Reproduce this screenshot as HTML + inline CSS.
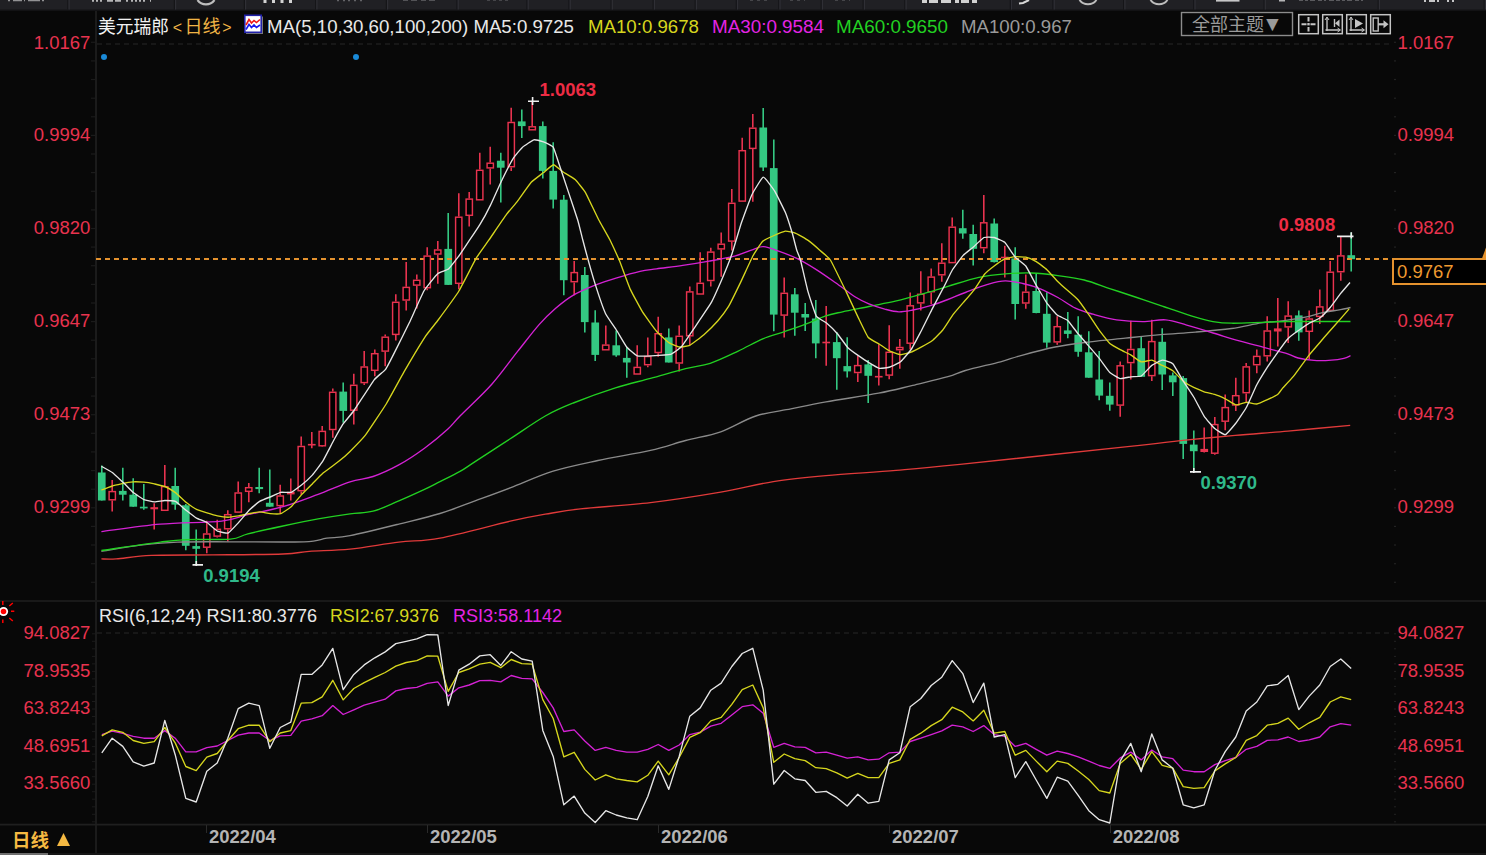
<!DOCTYPE html>
<html lang="zh"><head><meta charset="utf-8"><title>美元瑞郎 日线</title>
<style>
html,body{margin:0;padding:0;background:#080808;}
body{width:1486px;height:855px;overflow:hidden;position:relative;font-family:"Liberation Sans", "Noto Sans CJK SC", sans-serif;}
svg{position:absolute;left:0;top:0;display:block;}
svg text{font-family:"Liberation Sans", "Noto Sans CJK SC", sans-serif;}
</style></head><body>
<svg width="1486" height="855" viewBox="0 0 1486 855">
<rect width="1486" height="855" fill="#080808"/>
<rect x="0" y="0" width="1486" height="10" fill="#202024"/>
<rect x="0" y="9.5" width="1486" height="1.5" fill="#121214"/>
<rect x="67.3" y="0" width="1.2" height="9.5" fill="#151518"/>
<rect x="68.5" y="0" width="1.2" height="9.5" fill="#2f2f35"/>
<rect x="173.8" y="0" width="1.2" height="9.5" fill="#151518"/>
<rect x="175" y="0" width="1.2" height="9.5" fill="#2f2f35"/>
<rect x="243.8" y="0" width="1.2" height="9.5" fill="#151518"/>
<rect x="245" y="0" width="1.2" height="9.5" fill="#2f2f35"/>
<rect x="315.1" y="0" width="1.2" height="9.5" fill="#151518"/>
<rect x="316.3" y="0" width="1.2" height="9.5" fill="#2f2f35"/>
<rect x="385.8" y="0" width="1.2" height="9.5" fill="#151518"/>
<rect x="387" y="0" width="1.2" height="9.5" fill="#2f2f35"/>
<rect x="456.4" y="0" width="1.2" height="9.5" fill="#151518"/>
<rect x="457.6" y="0" width="1.2" height="9.5" fill="#2f2f35"/>
<rect x="526.4" y="0" width="1.2" height="9.5" fill="#151518"/>
<rect x="527.6" y="0" width="1.2" height="9.5" fill="#2f2f35"/>
<rect x="568.4" y="0" width="1.2" height="9.5" fill="#151518"/>
<rect x="569.6" y="0" width="1.2" height="9.5" fill="#2f2f35"/>
<rect x="610.5" y="0" width="1.2" height="9.5" fill="#151518"/>
<rect x="611.7" y="0" width="1.2" height="9.5" fill="#2f2f35"/>
<rect x="652.6" y="0" width="1.2" height="9.5" fill="#151518"/>
<rect x="653.8" y="0" width="1.2" height="9.5" fill="#2f2f35"/>
<rect x="694.6" y="0" width="1.2" height="9.5" fill="#151518"/>
<rect x="695.8" y="0" width="1.2" height="9.5" fill="#2f2f35"/>
<rect x="735.7" y="0" width="1.2" height="9.5" fill="#151518"/>
<rect x="736.9" y="0" width="1.2" height="9.5" fill="#2f2f35"/>
<rect x="778.2" y="0" width="1.2" height="9.5" fill="#151518"/>
<rect x="779.4" y="0" width="1.2" height="9.5" fill="#2f2f35"/>
<rect x="820.6" y="0" width="1.2" height="9.5" fill="#151518"/>
<rect x="821.8" y="0" width="1.2" height="9.5" fill="#2f2f35"/>
<rect x="862.6" y="0" width="1.2" height="9.5" fill="#151518"/>
<rect x="863.8" y="0" width="1.2" height="9.5" fill="#2f2f35"/>
<rect x="904.3" y="0" width="1.2" height="9.5" fill="#151518"/>
<rect x="905.5" y="0" width="1.2" height="9.5" fill="#2f2f35"/>
<rect x="1009.7" y="0" width="1.2" height="9.5" fill="#151518"/>
<rect x="1010.9" y="0" width="1.2" height="9.5" fill="#2f2f35"/>
<rect x="1052.4" y="0" width="1.2" height="9.5" fill="#151518"/>
<rect x="1053.6" y="0" width="1.2" height="9.5" fill="#2f2f35"/>
<rect x="1123.1" y="0" width="1.2" height="9.5" fill="#151518"/>
<rect x="1124.3" y="0" width="1.2" height="9.5" fill="#2f2f35"/>
<rect x="1193.2" y="0" width="1.2" height="9.5" fill="#151518"/>
<rect x="1194.4" y="0" width="1.2" height="9.5" fill="#2f2f35"/>
<rect x="1263.5" y="0" width="1.2" height="9.5" fill="#151518"/>
<rect x="1264.7" y="0" width="1.2" height="9.5" fill="#2f2f35"/>
<rect x="1377.6" y="0" width="1.2" height="9.5" fill="#151518"/>
<rect x="1378.8" y="0" width="1.2" height="9.5" fill="#2f2f35"/>
<rect x="1483.6" y="0" width="1.2" height="9.5" fill="#151518"/>
<rect x="1484.8" y="0" width="1.2" height="9.5" fill="#2f2f35"/>
<line x1="8" y1="0.65" x2="45" y2="0.65" stroke="#d0d0d0" stroke-width="1.3" stroke-dasharray="2 3 9 2 1 3 12 2" opacity="0.65"/>
<line x1="92" y1="0.85" x2="151" y2="0.85" stroke="#e8e8e8" stroke-width="1.7" stroke-dasharray="2 2 2 2 2 5 6 2 6 5 2 3 2 2" opacity="0.75"/>
<path d="M197.500 0A10.5 10.5 0 0 0 214.5 0" fill="none" stroke="#bdbdbd" stroke-width="2.2"/>
<line x1="263.5" y1="1.5" x2="292" y2="1.5" stroke="#f2f2f2" stroke-width="3" stroke-dasharray="3 5.5" opacity="0.85"/>
<line x1="337" y1="0.6" x2="362" y2="0.6" stroke="#707074" stroke-width="1.2" stroke-dasharray="2 4 2 3 2 4" opacity="0.85"/>
<line x1="403" y1="0.5" x2="437" y2="0.5" stroke="#5c5c60" stroke-width="1" stroke-dasharray="5 3 6 4" opacity="0.85"/>
<line x1="487" y1="0.5" x2="508" y2="0.5" stroke="#4c4c50" stroke-width="1" stroke-dasharray="3 3" opacity="0.85"/>
<line x1="750" y1="0.5" x2="770" y2="0.5" stroke="#4c4c50" stroke-width="1" stroke-dasharray="3 4" opacity="0.85"/>
<line x1="790" y1="0.5" x2="805" y2="0.5" stroke="#4c4c50" stroke-width="1" stroke-dasharray="3 4" opacity="0.85"/>
<line x1="835" y1="0.5" x2="850" y2="0.5" stroke="#4c4c50" stroke-width="1" stroke-dasharray="3 4" opacity="0.85"/>
<line x1="922" y1="1.5" x2="979" y2="1.5" stroke="#f0f0f0" stroke-width="3" stroke-dasharray="5 2 9 3 10 4 4 2 8 3" opacity="0.85"/>
<path d="M1019 3.5L1023 3L1029 0" fill="none" stroke="#d8d8d8" stroke-width="2"/>
<path d="M1079.500 0A10.5 10.5 0 0 0 1096.5 0" fill="none" stroke="#bdbdbd" stroke-width="2"/>
<path d="M1150.500 0A10.5 10.5 0 0 0 1167.5 0" fill="none" stroke="#bdbdbd" stroke-width="2"/>
<line x1="1216" y1="0.8" x2="1239.5" y2="0.8" stroke="#e4e4e4" stroke-width="1.6" stroke-dasharray="30 1" opacity="0.85"/>
<line x1="1279" y1="0.75" x2="1285" y2="0.75" stroke="#d0d0d0" stroke-width="1.5" stroke-dasharray="6 1" opacity="0.85"/>
<line x1="1299" y1="0.5" x2="1364" y2="0.5" stroke="#66666a" stroke-width="1" stroke-dasharray="4 2 3 2 5 3 4 2 2 3 5 2" opacity="0.85"/>
<line x1="1424" y1="1.0" x2="1454" y2="1.0" stroke="#e4e4e4" stroke-width="2" stroke-dasharray="2 3 6 2 2 8 2 3 2" opacity="0.85"/>
<rect x="95" y="11" width="2" height="844" fill="#1b1b1b"/>
<rect x="0" y="600" width="1486" height="2" fill="#191919"/>
<rect x="0" y="823.7" width="1486" height="1.8" fill="#1f1f1f"/>
<rect x="91" y="41.7" width="4" height="1.2" fill="#1b1b1b"/>
<rect x="1394" y="41.7" width="2" height="1.2" fill="#222"/>
<rect x="91" y="60.3" width="4" height="1.2" fill="#1b1b1b"/>
<rect x="1394" y="60.3" width="2" height="1.2" fill="#222"/>
<rect x="91" y="78.9" width="4" height="1.2" fill="#1b1b1b"/>
<rect x="1394" y="78.9" width="2" height="1.2" fill="#222"/>
<rect x="91" y="97.6" width="4" height="1.2" fill="#1b1b1b"/>
<rect x="1394" y="97.6" width="2" height="1.2" fill="#222"/>
<rect x="91" y="116.2" width="4" height="1.2" fill="#1b1b1b"/>
<rect x="1394" y="116.2" width="2" height="1.2" fill="#222"/>
<rect x="91" y="134.8" width="4" height="1.2" fill="#1b1b1b"/>
<rect x="1394" y="134.8" width="2" height="1.2" fill="#222"/>
<rect x="91" y="153.4" width="4" height="1.2" fill="#1b1b1b"/>
<rect x="1394" y="153.4" width="2" height="1.2" fill="#222"/>
<rect x="91" y="172" width="4" height="1.2" fill="#1b1b1b"/>
<rect x="1394" y="172" width="2" height="1.2" fill="#222"/>
<rect x="91" y="190.7" width="4" height="1.2" fill="#1b1b1b"/>
<rect x="1394" y="190.7" width="2" height="1.2" fill="#222"/>
<rect x="91" y="209.3" width="4" height="1.2" fill="#1b1b1b"/>
<rect x="1394" y="209.3" width="2" height="1.2" fill="#222"/>
<rect x="91" y="227.9" width="4" height="1.2" fill="#1b1b1b"/>
<rect x="1394" y="227.9" width="2" height="1.2" fill="#222"/>
<rect x="91" y="246.5" width="4" height="1.2" fill="#1b1b1b"/>
<rect x="1394" y="246.5" width="2" height="1.2" fill="#222"/>
<rect x="91" y="265.1" width="4" height="1.2" fill="#1b1b1b"/>
<rect x="1394" y="265.1" width="2" height="1.2" fill="#222"/>
<rect x="91" y="283.8" width="4" height="1.2" fill="#1b1b1b"/>
<rect x="1394" y="283.8" width="2" height="1.2" fill="#222"/>
<rect x="91" y="302.4" width="4" height="1.2" fill="#1b1b1b"/>
<rect x="1394" y="302.4" width="2" height="1.2" fill="#222"/>
<rect x="91" y="321" width="4" height="1.2" fill="#1b1b1b"/>
<rect x="1394" y="321" width="2" height="1.2" fill="#222"/>
<rect x="91" y="339.6" width="4" height="1.2" fill="#1b1b1b"/>
<rect x="1394" y="339.6" width="2" height="1.2" fill="#222"/>
<rect x="91" y="358.2" width="4" height="1.2" fill="#1b1b1b"/>
<rect x="1394" y="358.2" width="2" height="1.2" fill="#222"/>
<rect x="91" y="376.9" width="4" height="1.2" fill="#1b1b1b"/>
<rect x="1394" y="376.9" width="2" height="1.2" fill="#222"/>
<rect x="91" y="395.5" width="4" height="1.2" fill="#1b1b1b"/>
<rect x="1394" y="395.5" width="2" height="1.2" fill="#222"/>
<rect x="91" y="414.1" width="4" height="1.2" fill="#1b1b1b"/>
<rect x="1394" y="414.1" width="2" height="1.2" fill="#222"/>
<rect x="91" y="432.7" width="4" height="1.2" fill="#1b1b1b"/>
<rect x="1394" y="432.7" width="2" height="1.2" fill="#222"/>
<rect x="91" y="451.3" width="4" height="1.2" fill="#1b1b1b"/>
<rect x="1394" y="451.3" width="2" height="1.2" fill="#222"/>
<rect x="91" y="470" width="4" height="1.2" fill="#1b1b1b"/>
<rect x="1394" y="470" width="2" height="1.2" fill="#222"/>
<rect x="91" y="488.6" width="4" height="1.2" fill="#1b1b1b"/>
<rect x="1394" y="488.6" width="2" height="1.2" fill="#222"/>
<rect x="91" y="507.2" width="4" height="1.2" fill="#1b1b1b"/>
<rect x="1394" y="507.2" width="2" height="1.2" fill="#222"/>
<rect x="91" y="525.8" width="4" height="1.2" fill="#1b1b1b"/>
<rect x="1394" y="525.8" width="2" height="1.2" fill="#222"/>
<rect x="91" y="544.4" width="4" height="1.2" fill="#1b1b1b"/>
<rect x="1394" y="544.4" width="2" height="1.2" fill="#222"/>
<rect x="91" y="563.1" width="4" height="1.2" fill="#1b1b1b"/>
<rect x="1394" y="563.1" width="2" height="1.2" fill="#222"/>
<rect x="91" y="581.7" width="4" height="1.2" fill="#1b1b1b"/>
<rect x="1394" y="581.7" width="2" height="1.2" fill="#222"/>
<rect x="92" y="633.3" width="3" height="1" fill="#1b1b1b"/>
<rect x="1394" y="633.3" width="2" height="1" fill="#222"/>
<rect x="92" y="640.8" width="3" height="1" fill="#1b1b1b"/>
<rect x="1394" y="640.8" width="2" height="1" fill="#222"/>
<rect x="92" y="648.3" width="3" height="1" fill="#1b1b1b"/>
<rect x="1394" y="648.3" width="2" height="1" fill="#222"/>
<rect x="92" y="655.9" width="3" height="1" fill="#1b1b1b"/>
<rect x="1394" y="655.9" width="2" height="1" fill="#222"/>
<rect x="92" y="663.4" width="3" height="1" fill="#1b1b1b"/>
<rect x="1394" y="663.4" width="2" height="1" fill="#222"/>
<rect x="92" y="670.9" width="3" height="1" fill="#1b1b1b"/>
<rect x="1394" y="670.9" width="2" height="1" fill="#222"/>
<rect x="92" y="678.4" width="3" height="1" fill="#1b1b1b"/>
<rect x="1394" y="678.4" width="2" height="1" fill="#222"/>
<rect x="92" y="685.9" width="3" height="1" fill="#1b1b1b"/>
<rect x="1394" y="685.9" width="2" height="1" fill="#222"/>
<rect x="92" y="693.5" width="3" height="1" fill="#1b1b1b"/>
<rect x="1394" y="693.5" width="2" height="1" fill="#222"/>
<rect x="92" y="701" width="3" height="1" fill="#1b1b1b"/>
<rect x="1394" y="701" width="2" height="1" fill="#222"/>
<rect x="92" y="708.5" width="3" height="1" fill="#1b1b1b"/>
<rect x="1394" y="708.5" width="2" height="1" fill="#222"/>
<rect x="92" y="716" width="3" height="1" fill="#1b1b1b"/>
<rect x="1394" y="716" width="2" height="1" fill="#222"/>
<rect x="92" y="723.5" width="3" height="1" fill="#1b1b1b"/>
<rect x="1394" y="723.5" width="2" height="1" fill="#222"/>
<rect x="92" y="731.1" width="3" height="1" fill="#1b1b1b"/>
<rect x="1394" y="731.1" width="2" height="1" fill="#222"/>
<rect x="92" y="738.6" width="3" height="1" fill="#1b1b1b"/>
<rect x="1394" y="738.6" width="2" height="1" fill="#222"/>
<rect x="92" y="746.1" width="3" height="1" fill="#1b1b1b"/>
<rect x="1394" y="746.1" width="2" height="1" fill="#222"/>
<rect x="92" y="753.6" width="3" height="1" fill="#1b1b1b"/>
<rect x="1394" y="753.6" width="2" height="1" fill="#222"/>
<rect x="92" y="761.1" width="3" height="1" fill="#1b1b1b"/>
<rect x="1394" y="761.1" width="2" height="1" fill="#222"/>
<rect x="92" y="768.7" width="3" height="1" fill="#1b1b1b"/>
<rect x="1394" y="768.7" width="2" height="1" fill="#222"/>
<rect x="92" y="776.2" width="3" height="1" fill="#1b1b1b"/>
<rect x="1394" y="776.2" width="2" height="1" fill="#222"/>
<rect x="92" y="783.7" width="3" height="1" fill="#1b1b1b"/>
<rect x="1394" y="783.7" width="2" height="1" fill="#222"/>
<rect x="92" y="791.2" width="3" height="1" fill="#1b1b1b"/>
<rect x="1394" y="791.2" width="2" height="1" fill="#222"/>
<rect x="92" y="798.7" width="3" height="1" fill="#1b1b1b"/>
<rect x="1394" y="798.7" width="2" height="1" fill="#222"/>
<rect x="92" y="806.3" width="3" height="1" fill="#1b1b1b"/>
<rect x="1394" y="806.3" width="2" height="1" fill="#222"/>
<rect x="92" y="813.8" width="3" height="1" fill="#1b1b1b"/>
<rect x="1394" y="813.8" width="2" height="1" fill="#222"/>
<rect x="92" y="821.3" width="3" height="1" fill="#1b1b1b"/>
<rect x="1394" y="821.3" width="2" height="1" fill="#222"/>
<line x1="97" y1="44" x2="1392" y2="44" stroke="#1d1d1d" stroke-width="1.6" stroke-dasharray="5 4"/>
<line x1="97" y1="633" x2="1392" y2="633" stroke="#1d1d1d" stroke-width="1.6" stroke-dasharray="5 4"/>
<rect x="206" y="825" width="1" height="8" fill="#2a2a2a"/>
<rect x="427" y="825" width="1" height="8" fill="#2a2a2a"/>
<rect x="658" y="825" width="1" height="8" fill="#2a2a2a"/>
<rect x="889" y="825" width="1" height="8" fill="#2a2a2a"/>
<rect x="1110" y="825" width="1" height="8" fill="#2a2a2a"/>
<rect x="0" y="853" width="1486" height="2" fill="#161616"/>
<rect x="0" y="853" width="48" height="2" fill="#6e6e6e"/>
<circle cx="104" cy="57" r="3" fill="#1a8ad8"/>
<circle cx="356" cy="57" r="3" fill="#1a8ad8"/>
<line x1="101.8" y1="465.4" x2="101.8" y2="500.5" stroke="#34c882" stroke-width="1.6"/>
<rect x="97.9" y="472.5" width="7.7" height="28" fill="#34c882"/>
<line x1="122.8" y1="467.7" x2="122.8" y2="500.5" stroke="#34c882" stroke-width="1.6"/>
<rect x="118.9" y="490.9" width="7.7" height="3.8" fill="#34c882"/>
<line x1="133.2" y1="478.2" x2="133.2" y2="506.7" stroke="#34c882" stroke-width="1.6"/>
<rect x="129.4" y="494.7" width="7.7" height="12" fill="#34c882"/>
<line x1="143.8" y1="483.9" x2="143.8" y2="509.8" stroke="#34c882" stroke-width="1.6"/>
<rect x="139.9" y="506.7" width="7.7" height="1.7" fill="#34c882"/>
<line x1="175.2" y1="467.7" x2="175.2" y2="509.8" stroke="#34c882" stroke-width="1.6"/>
<rect x="171.4" y="486" width="7.7" height="18.6" fill="#34c882"/>
<line x1="185.8" y1="504" x2="185.8" y2="550.2" stroke="#34c882" stroke-width="1.6"/>
<rect x="181.9" y="505.3" width="7.7" height="40.5" fill="#34c882"/>
<line x1="196.2" y1="529.5" x2="196.2" y2="564.9" stroke="#34c882" stroke-width="1.6"/>
<rect x="192.4" y="546.1" width="7.7" height="2.7" fill="#34c882"/>
<line x1="259.2" y1="467.7" x2="259.2" y2="493.2" stroke="#34c882" stroke-width="1.6"/>
<rect x="255.4" y="487" width="7.7" height="2.1" fill="#34c882"/>
<line x1="269.8" y1="469.5" x2="269.8" y2="506.7" stroke="#34c882" stroke-width="1.6"/>
<rect x="265.9" y="502.8" width="7.7" height="3.9" fill="#34c882"/>
<line x1="343.2" y1="382.5" x2="343.2" y2="422.8" stroke="#34c882" stroke-width="1.6"/>
<rect x="339.4" y="391.6" width="7.7" height="19.3" fill="#34c882"/>
<line x1="448.2" y1="213" x2="448.2" y2="284.9" stroke="#34c882" stroke-width="1.6"/>
<rect x="444.4" y="248.9" width="7.7" height="36" fill="#34c882"/>
<line x1="500.8" y1="152.8" x2="500.8" y2="202.5" stroke="#34c882" stroke-width="1.6"/>
<rect x="496.9" y="160.7" width="7.7" height="7" fill="#34c882"/>
<line x1="521.8" y1="109.5" x2="521.8" y2="138.1" stroke="#34c882" stroke-width="1.6"/>
<rect x="517.9" y="121.4" width="7.7" height="4.7" fill="#34c882"/>
<line x1="542.8" y1="121.4" x2="542.8" y2="178.4" stroke="#34c882" stroke-width="1.6"/>
<rect x="538.9" y="126.1" width="7.7" height="44.8" fill="#34c882"/>
<line x1="553.2" y1="142.3" x2="553.2" y2="208.6" stroke="#34c882" stroke-width="1.6"/>
<rect x="549.4" y="170.9" width="7.7" height="28.7" fill="#34c882"/>
<line x1="563.8" y1="195" x2="563.8" y2="295.3" stroke="#34c882" stroke-width="1.6"/>
<rect x="559.9" y="199.7" width="7.7" height="80.5" fill="#34c882"/>
<line x1="584.8" y1="267" x2="584.8" y2="332.6" stroke="#34c882" stroke-width="1.6"/>
<rect x="580.9" y="275" width="7.7" height="47.1" fill="#34c882"/>
<line x1="595.2" y1="310.3" x2="595.2" y2="361" stroke="#34c882" stroke-width="1.6"/>
<rect x="591.4" y="322.5" width="7.7" height="32.4" fill="#34c882"/>
<line x1="616.2" y1="330.4" x2="616.2" y2="356.7" stroke="#34c882" stroke-width="1.6"/>
<rect x="612.4" y="345.3" width="7.7" height="10.1" fill="#34c882"/>
<line x1="626.8" y1="347" x2="626.8" y2="377.7" stroke="#34c882" stroke-width="1.6"/>
<rect x="622.9" y="357.9" width="7.7" height="4.6" fill="#34c882"/>
<line x1="668.8" y1="328.6" x2="668.8" y2="362.5" stroke="#34c882" stroke-width="1.6"/>
<rect x="664.9" y="337.4" width="7.7" height="25.1" fill="#34c882"/>
<line x1="763.2" y1="107.9" x2="763.2" y2="171" stroke="#34c882" stroke-width="1.6"/>
<rect x="759.4" y="127.5" width="7.7" height="40" fill="#34c882"/>
<line x1="773.8" y1="139.5" x2="773.8" y2="331.2" stroke="#34c882" stroke-width="1.6"/>
<rect x="769.9" y="168.1" width="7.7" height="146.5" fill="#34c882"/>
<line x1="794.8" y1="288.1" x2="794.8" y2="335.7" stroke="#34c882" stroke-width="1.6"/>
<rect x="790.9" y="294.3" width="7.7" height="18.4" fill="#34c882"/>
<line x1="805.2" y1="303.1" x2="805.2" y2="331.1" stroke="#34c882" stroke-width="1.6"/>
<rect x="801.4" y="314" width="7.7" height="3.5" fill="#34c882"/>
<line x1="815.8" y1="300" x2="815.8" y2="358.3" stroke="#34c882" stroke-width="1.6"/>
<rect x="811.9" y="318.5" width="7.7" height="24.9" fill="#34c882"/>
<line x1="836.8" y1="331.9" x2="836.8" y2="389.8" stroke="#34c882" stroke-width="1.6"/>
<rect x="832.9" y="342.1" width="7.7" height="16.1" fill="#34c882"/>
<line x1="847.2" y1="337.2" x2="847.2" y2="377.5" stroke="#34c882" stroke-width="1.6"/>
<rect x="843.4" y="366.1" width="7.7" height="5.3" fill="#34c882"/>
<line x1="868.2" y1="360" x2="868.2" y2="403" stroke="#34c882" stroke-width="1.6"/>
<rect x="864.4" y="364.4" width="7.7" height="11.4" fill="#34c882"/>
<line x1="962.8" y1="209.8" x2="962.8" y2="238.8" stroke="#34c882" stroke-width="1.6"/>
<rect x="958.9" y="228.2" width="7.7" height="5.3" fill="#34c882"/>
<line x1="973.2" y1="224.7" x2="973.2" y2="265.4" stroke="#34c882" stroke-width="1.6"/>
<rect x="969.4" y="234" width="7.7" height="14.8" fill="#34c882"/>
<line x1="994.2" y1="218.6" x2="994.2" y2="262.5" stroke="#34c882" stroke-width="1.6"/>
<rect x="990.4" y="223.5" width="7.7" height="38.6" fill="#34c882"/>
<line x1="1015.2" y1="247.2" x2="1015.2" y2="319.4" stroke="#34c882" stroke-width="1.6"/>
<rect x="1011.4" y="258.4" width="7.7" height="45.6" fill="#34c882"/>
<line x1="1036.2" y1="273.9" x2="1036.2" y2="313.3" stroke="#34c882" stroke-width="1.6"/>
<rect x="1032.4" y="291" width="7.7" height="22" fill="#34c882"/>
<line x1="1046.8" y1="292.3" x2="1046.8" y2="347.8" stroke="#34c882" stroke-width="1.6"/>
<rect x="1042.9" y="313.8" width="7.7" height="28.8" fill="#34c882"/>
<line x1="1067.8" y1="311.9" x2="1067.8" y2="338.2" stroke="#34c882" stroke-width="1.6"/>
<rect x="1063.9" y="330.4" width="7.7" height="3.5" fill="#34c882"/>
<line x1="1078.2" y1="316.2" x2="1078.2" y2="356.7" stroke="#34c882" stroke-width="1.6"/>
<rect x="1074.4" y="334.7" width="7.7" height="17.1" fill="#34c882"/>
<line x1="1088.8" y1="331.2" x2="1088.8" y2="377.7" stroke="#34c882" stroke-width="1.6"/>
<rect x="1084.9" y="352.3" width="7.7" height="25.4" fill="#34c882"/>
<line x1="1099.2" y1="351.1" x2="1099.2" y2="400.2" stroke="#34c882" stroke-width="1.6"/>
<rect x="1095.4" y="379.5" width="7.7" height="16.1" fill="#34c882"/>
<line x1="1109.8" y1="382.6" x2="1109.8" y2="410.7" stroke="#34c882" stroke-width="1.6"/>
<rect x="1105.9" y="395.8" width="7.7" height="8.8" fill="#34c882"/>
<line x1="1141.2" y1="336" x2="1141.2" y2="376.8" stroke="#34c882" stroke-width="1.6"/>
<rect x="1137.4" y="348.2" width="7.7" height="28.6" fill="#34c882"/>
<line x1="1162.2" y1="328.2" x2="1162.2" y2="389.9" stroke="#34c882" stroke-width="1.6"/>
<rect x="1158.4" y="341.8" width="7.7" height="32.7" fill="#34c882"/>
<line x1="1172.8" y1="372.5" x2="1172.8" y2="396" stroke="#34c882" stroke-width="1.6"/>
<rect x="1168.9" y="375.4" width="7.7" height="6.9" fill="#34c882"/>
<line x1="1183.2" y1="376" x2="1183.2" y2="459.1" stroke="#34c882" stroke-width="1.6"/>
<rect x="1179.4" y="378.1" width="7.7" height="65.8" fill="#34c882"/>
<line x1="1193.8" y1="430.5" x2="1193.8" y2="471.9" stroke="#34c882" stroke-width="1.6"/>
<rect x="1189.9" y="444.6" width="7.7" height="6.6" fill="#34c882"/>
<line x1="1298.8" y1="310.4" x2="1298.8" y2="340.8" stroke="#34c882" stroke-width="1.6"/>
<rect x="1294.9" y="315.4" width="7.7" height="17" fill="#34c882"/>
<line x1="1351.2" y1="232.4" x2="1351.2" y2="271.5" stroke="#34c882" stroke-width="1.6"/>
<rect x="1347.4" y="255.2" width="7.7" height="4" fill="#34c882"/>
<line x1="96" y1="259" x2="1390" y2="259" stroke="#e4922e" stroke-width="2" stroke-dasharray="5 4"/>
<line x1="112.2" y1="480" x2="112.2" y2="490.9" stroke="#e8334f" stroke-width="1.6"/>
<line x1="112.2" y1="500.5" x2="112.2" y2="511.6" stroke="#e8334f" stroke-width="1.6"/>
<rect x="109.1" y="491.6" width="6.3" height="8.2" fill="#000" stroke="#e8334f" stroke-width="1.45"/>
<line x1="154.2" y1="503.2" x2="154.2" y2="529.5" stroke="#e8334f" stroke-width="1.6"/>
<rect x="150.4" y="507.2" width="7.7" height="2.1" fill="#e8334f"/>
<line x1="164.8" y1="465.1" x2="164.8" y2="486" stroke="#e8334f" stroke-width="1.6"/>
<rect x="161.6" y="486.7" width="6.3" height="23.6" fill="#000" stroke="#e8334f" stroke-width="1.45"/>
<line x1="206.8" y1="520.7" x2="206.8" y2="533.3" stroke="#e8334f" stroke-width="1.6"/>
<line x1="206.8" y1="547.9" x2="206.8" y2="553.2" stroke="#e8334f" stroke-width="1.6"/>
<rect x="203.6" y="534" width="6.3" height="13.2" fill="#000" stroke="#e8334f" stroke-width="1.45"/>
<line x1="217.2" y1="519.8" x2="217.2" y2="528.6" stroke="#e8334f" stroke-width="1.6"/>
<line x1="217.2" y1="536.8" x2="217.2" y2="537.4" stroke="#e8334f" stroke-width="1.6"/>
<rect x="214.1" y="529.3" width="6.3" height="6.8" fill="#000" stroke="#e8334f" stroke-width="1.45"/>
<line x1="227.8" y1="510.2" x2="227.8" y2="514" stroke="#e8334f" stroke-width="1.6"/>
<line x1="227.8" y1="529.5" x2="227.8" y2="541.4" stroke="#e8334f" stroke-width="1.6"/>
<rect x="224.6" y="514.7" width="6.3" height="14.1" fill="#000" stroke="#e8334f" stroke-width="1.45"/>
<line x1="238.2" y1="481.6" x2="238.2" y2="492.3" stroke="#e8334f" stroke-width="1.6"/>
<rect x="235.1" y="493" width="6.3" height="19.1" fill="#000" stroke="#e8334f" stroke-width="1.45"/>
<line x1="248.8" y1="483" x2="248.8" y2="487" stroke="#e8334f" stroke-width="1.6"/>
<line x1="248.8" y1="492" x2="248.8" y2="502.3" stroke="#e8334f" stroke-width="1.6"/>
<rect x="245.6" y="487.7" width="6.3" height="3.6" fill="#000" stroke="#e8334f" stroke-width="1.45"/>
<line x1="280.2" y1="484.7" x2="280.2" y2="495.3" stroke="#e8334f" stroke-width="1.6"/>
<line x1="280.2" y1="506.3" x2="280.2" y2="513.3" stroke="#e8334f" stroke-width="1.6"/>
<rect x="277.1" y="496" width="6.3" height="9.6" fill="#000" stroke="#e8334f" stroke-width="1.45"/>
<line x1="290.8" y1="478.6" x2="290.8" y2="500.5" stroke="#e8334f" stroke-width="1.6"/>
<rect x="286.9" y="491.8" width="7.7" height="2.6" fill="#e8334f"/>
<line x1="301.2" y1="436.5" x2="301.2" y2="445.8" stroke="#e8334f" stroke-width="1.6"/>
<line x1="301.2" y1="491.4" x2="301.2" y2="494.7" stroke="#e8334f" stroke-width="1.6"/>
<rect x="298.1" y="446.5" width="6.3" height="44.2" fill="#000" stroke="#e8334f" stroke-width="1.45"/>
<line x1="311.8" y1="431.9" x2="311.8" y2="448.2" stroke="#e8334f" stroke-width="1.6"/>
<rect x="307.9" y="443.9" width="7.7" height="1.6" fill="#e8334f"/>
<line x1="322.2" y1="426" x2="322.2" y2="430.7" stroke="#e8334f" stroke-width="1.6"/>
<line x1="322.2" y1="446.5" x2="322.2" y2="447" stroke="#e8334f" stroke-width="1.6"/>
<rect x="319.1" y="431.4" width="6.3" height="14.4" fill="#000" stroke="#e8334f" stroke-width="1.45"/>
<line x1="332.8" y1="388.6" x2="332.8" y2="391.6" stroke="#e8334f" stroke-width="1.6"/>
<line x1="332.8" y1="430.2" x2="332.8" y2="437.7" stroke="#e8334f" stroke-width="1.6"/>
<rect x="329.6" y="392.3" width="6.3" height="37.2" fill="#000" stroke="#e8334f" stroke-width="1.45"/>
<line x1="353.8" y1="373.7" x2="353.8" y2="384.6" stroke="#e8334f" stroke-width="1.6"/>
<line x1="353.8" y1="410.9" x2="353.8" y2="424.6" stroke="#e8334f" stroke-width="1.6"/>
<rect x="350.6" y="385.3" width="6.3" height="24.9" fill="#000" stroke="#e8334f" stroke-width="1.45"/>
<line x1="364.2" y1="350.9" x2="364.2" y2="366.3" stroke="#e8334f" stroke-width="1.6"/>
<line x1="364.2" y1="383.3" x2="364.2" y2="385.1" stroke="#e8334f" stroke-width="1.6"/>
<rect x="361.1" y="367" width="6.3" height="15.6" fill="#000" stroke="#e8334f" stroke-width="1.45"/>
<line x1="374.8" y1="349.6" x2="374.8" y2="353" stroke="#e8334f" stroke-width="1.6"/>
<line x1="374.8" y1="371" x2="374.8" y2="376.3" stroke="#e8334f" stroke-width="1.6"/>
<rect x="371.6" y="353.7" width="6.3" height="16.6" fill="#000" stroke="#e8334f" stroke-width="1.45"/>
<line x1="385.2" y1="334.6" x2="385.2" y2="336.5" stroke="#e8334f" stroke-width="1.6"/>
<line x1="385.2" y1="351.8" x2="385.2" y2="366.3" stroke="#e8334f" stroke-width="1.6"/>
<rect x="382.1" y="337.2" width="6.3" height="13.9" fill="#000" stroke="#e8334f" stroke-width="1.45"/>
<line x1="395.8" y1="294.2" x2="395.8" y2="301.6" stroke="#e8334f" stroke-width="1.6"/>
<line x1="395.8" y1="335.1" x2="395.8" y2="340.4" stroke="#e8334f" stroke-width="1.6"/>
<rect x="392.6" y="302.3" width="6.3" height="32.1" fill="#000" stroke="#e8334f" stroke-width="1.45"/>
<line x1="406.2" y1="262.1" x2="406.2" y2="286.7" stroke="#e8334f" stroke-width="1.6"/>
<line x1="406.2" y1="300.7" x2="406.2" y2="310.4" stroke="#e8334f" stroke-width="1.6"/>
<rect x="403.1" y="287.4" width="6.3" height="12.6" fill="#000" stroke="#e8334f" stroke-width="1.45"/>
<line x1="416.8" y1="274.4" x2="416.8" y2="279.6" stroke="#e8334f" stroke-width="1.6"/>
<line x1="416.8" y1="285.8" x2="416.8" y2="308.6" stroke="#e8334f" stroke-width="1.6"/>
<rect x="413.6" y="280.3" width="6.3" height="4.8" fill="#000" stroke="#e8334f" stroke-width="1.45"/>
<line x1="427.2" y1="247.2" x2="427.2" y2="255.4" stroke="#e8334f" stroke-width="1.6"/>
<line x1="427.2" y1="288.4" x2="427.2" y2="290.2" stroke="#e8334f" stroke-width="1.6"/>
<rect x="424.1" y="256.1" width="6.3" height="31.6" fill="#000" stroke="#e8334f" stroke-width="1.45"/>
<line x1="437.8" y1="241" x2="437.8" y2="249.3" stroke="#e8334f" stroke-width="1.6"/>
<line x1="437.8" y1="254.7" x2="437.8" y2="283.7" stroke="#e8334f" stroke-width="1.6"/>
<rect x="434.6" y="250" width="6.3" height="4" fill="#000" stroke="#e8334f" stroke-width="1.45"/>
<line x1="458.8" y1="193.3" x2="458.8" y2="216.5" stroke="#e8334f" stroke-width="1.6"/>
<line x1="458.8" y1="284" x2="458.8" y2="289.3" stroke="#e8334f" stroke-width="1.6"/>
<rect x="455.6" y="217.2" width="6.3" height="66.1" fill="#000" stroke="#e8334f" stroke-width="1.45"/>
<line x1="469.2" y1="191.9" x2="469.2" y2="198.4" stroke="#e8334f" stroke-width="1.6"/>
<line x1="469.2" y1="216" x2="469.2" y2="226.5" stroke="#e8334f" stroke-width="1.6"/>
<rect x="466.1" y="199.1" width="6.3" height="16.2" fill="#000" stroke="#e8334f" stroke-width="1.45"/>
<line x1="479.8" y1="152.8" x2="479.8" y2="169.6" stroke="#e8334f" stroke-width="1.6"/>
<rect x="476.6" y="170.3" width="6.3" height="29.5" fill="#000" stroke="#e8334f" stroke-width="1.45"/>
<line x1="490.2" y1="146.8" x2="490.2" y2="162.5" stroke="#e8334f" stroke-width="1.6"/>
<line x1="490.2" y1="168.6" x2="490.2" y2="184.4" stroke="#e8334f" stroke-width="1.6"/>
<rect x="487.1" y="163.2" width="6.3" height="4.7" fill="#000" stroke="#e8334f" stroke-width="1.45"/>
<line x1="511.2" y1="107.7" x2="511.2" y2="121.8" stroke="#e8334f" stroke-width="1.6"/>
<line x1="511.2" y1="167.4" x2="511.2" y2="170.9" stroke="#e8334f" stroke-width="1.6"/>
<rect x="508.1" y="122.5" width="6.3" height="44.2" fill="#000" stroke="#e8334f" stroke-width="1.45"/>
<line x1="532.2" y1="101.2" x2="532.2" y2="126.1" stroke="#e8334f" stroke-width="1.6"/>
<rect x="529.1" y="126.8" width="6.3" height="3" fill="#000" stroke="#e8334f" stroke-width="1.45"/>
<line x1="574.2" y1="261" x2="574.2" y2="271.9" stroke="#e8334f" stroke-width="1.6"/>
<line x1="574.2" y1="282.4" x2="574.2" y2="295.3" stroke="#e8334f" stroke-width="1.6"/>
<rect x="571.1" y="272.6" width="6.3" height="9.1" fill="#000" stroke="#e8334f" stroke-width="1.45"/>
<line x1="605.8" y1="325.6" x2="605.8" y2="344.4" stroke="#e8334f" stroke-width="1.6"/>
<rect x="602.6" y="345.1" width="6.3" height="4.7" fill="#000" stroke="#e8334f" stroke-width="1.45"/>
<line x1="637.2" y1="345.3" x2="637.2" y2="366.7" stroke="#e8334f" stroke-width="1.6"/>
<rect x="634.1" y="367.4" width="6.3" height="6.6" fill="#000" stroke="#e8334f" stroke-width="1.45"/>
<line x1="647.8" y1="337.4" x2="647.8" y2="355.8" stroke="#e8334f" stroke-width="1.6"/>
<line x1="647.8" y1="365.4" x2="647.8" y2="367.2" stroke="#e8334f" stroke-width="1.6"/>
<rect x="644.6" y="356.5" width="6.3" height="8.2" fill="#000" stroke="#e8334f" stroke-width="1.45"/>
<line x1="658.2" y1="316.8" x2="658.2" y2="333" stroke="#e8334f" stroke-width="1.6"/>
<line x1="658.2" y1="353.2" x2="658.2" y2="356.7" stroke="#e8334f" stroke-width="1.6"/>
<rect x="655.1" y="333.7" width="6.3" height="18.8" fill="#000" stroke="#e8334f" stroke-width="1.45"/>
<line x1="679.2" y1="325.6" x2="679.2" y2="335.6" stroke="#e8334f" stroke-width="1.6"/>
<line x1="679.2" y1="363.7" x2="679.2" y2="371.6" stroke="#e8334f" stroke-width="1.6"/>
<rect x="676.1" y="336.3" width="6.3" height="26.7" fill="#000" stroke="#e8334f" stroke-width="1.45"/>
<line x1="689.8" y1="286.5" x2="689.8" y2="291.2" stroke="#e8334f" stroke-width="1.6"/>
<line x1="689.8" y1="336.5" x2="689.8" y2="344.9" stroke="#e8334f" stroke-width="1.6"/>
<rect x="686.6" y="291.9" width="6.3" height="43.9" fill="#000" stroke="#e8334f" stroke-width="1.45"/>
<line x1="700.2" y1="252.3" x2="700.2" y2="282.6" stroke="#e8334f" stroke-width="1.6"/>
<rect x="697.1" y="283.3" width="6.3" height="10.7" fill="#000" stroke="#e8334f" stroke-width="1.45"/>
<line x1="710.8" y1="247.7" x2="710.8" y2="251.4" stroke="#e8334f" stroke-width="1.6"/>
<line x1="710.8" y1="281.2" x2="710.8" y2="286.5" stroke="#e8334f" stroke-width="1.6"/>
<rect x="707.6" y="252.1" width="6.3" height="28.4" fill="#000" stroke="#e8334f" stroke-width="1.45"/>
<line x1="721.2" y1="232.5" x2="721.2" y2="243.5" stroke="#e8334f" stroke-width="1.6"/>
<line x1="721.2" y1="249.6" x2="721.2" y2="276.8" stroke="#e8334f" stroke-width="1.6"/>
<rect x="718.1" y="244.2" width="6.3" height="4.7" fill="#000" stroke="#e8334f" stroke-width="1.45"/>
<line x1="731.8" y1="189.1" x2="731.8" y2="202.6" stroke="#e8334f" stroke-width="1.6"/>
<line x1="731.8" y1="241.8" x2="731.8" y2="250.5" stroke="#e8334f" stroke-width="1.6"/>
<rect x="728.6" y="203.3" width="6.3" height="37.8" fill="#000" stroke="#e8334f" stroke-width="1.45"/>
<line x1="742.2" y1="137.7" x2="742.2" y2="150" stroke="#e8334f" stroke-width="1.6"/>
<rect x="739.1" y="150.7" width="6.3" height="50.4" fill="#000" stroke="#e8334f" stroke-width="1.45"/>
<line x1="752.8" y1="114" x2="752.8" y2="127.5" stroke="#e8334f" stroke-width="1.6"/>
<line x1="752.8" y1="149.1" x2="752.8" y2="201.8" stroke="#e8334f" stroke-width="1.6"/>
<rect x="749.6" y="128.2" width="6.3" height="20.2" fill="#000" stroke="#e8334f" stroke-width="1.45"/>
<line x1="784.2" y1="277.4" x2="784.2" y2="292.6" stroke="#e8334f" stroke-width="1.6"/>
<line x1="784.2" y1="315.8" x2="784.2" y2="337.4" stroke="#e8334f" stroke-width="1.6"/>
<rect x="781.1" y="293.3" width="6.3" height="21.8" fill="#000" stroke="#e8334f" stroke-width="1.45"/>
<line x1="826.2" y1="306" x2="826.2" y2="365.8" stroke="#e8334f" stroke-width="1.6"/>
<rect x="822.4" y="341.7" width="7.7" height="1.6" fill="#e8334f"/>
<line x1="857.8" y1="355.6" x2="857.8" y2="364.9" stroke="#e8334f" stroke-width="1.6"/>
<line x1="857.8" y1="373.2" x2="857.8" y2="381.9" stroke="#e8334f" stroke-width="1.6"/>
<rect x="854.6" y="365.6" width="6.3" height="6.9" fill="#000" stroke="#e8334f" stroke-width="1.45"/>
<line x1="878.8" y1="344.2" x2="878.8" y2="385.4" stroke="#e8334f" stroke-width="1.6"/>
<rect x="874.9" y="375.9" width="7.7" height="1.6" fill="#e8334f"/>
<line x1="889.2" y1="325.3" x2="889.2" y2="351.6" stroke="#e8334f" stroke-width="1.6"/>
<line x1="889.2" y1="375.8" x2="889.2" y2="379.3" stroke="#e8334f" stroke-width="1.6"/>
<rect x="886.1" y="352.3" width="6.3" height="22.8" fill="#000" stroke="#e8334f" stroke-width="1.45"/>
<line x1="899.8" y1="338.9" x2="899.8" y2="346.8" stroke="#e8334f" stroke-width="1.6"/>
<line x1="899.8" y1="350.4" x2="899.8" y2="368.8" stroke="#e8334f" stroke-width="1.6"/>
<rect x="896.6" y="347.5" width="6.3" height="2.2" fill="#000" stroke="#e8334f" stroke-width="1.45"/>
<line x1="910.2" y1="292.4" x2="910.2" y2="305.1" stroke="#e8334f" stroke-width="1.6"/>
<line x1="910.2" y1="343.9" x2="910.2" y2="349.5" stroke="#e8334f" stroke-width="1.6"/>
<rect x="907.1" y="305.8" width="6.3" height="37.4" fill="#000" stroke="#e8334f" stroke-width="1.45"/>
<line x1="920.8" y1="271.3" x2="920.8" y2="293.6" stroke="#e8334f" stroke-width="1.6"/>
<line x1="920.8" y1="303.6" x2="920.8" y2="310.6" stroke="#e8334f" stroke-width="1.6"/>
<rect x="917.6" y="294.3" width="6.3" height="8.6" fill="#000" stroke="#e8334f" stroke-width="1.45"/>
<line x1="931.2" y1="268.5" x2="931.2" y2="276.4" stroke="#e8334f" stroke-width="1.6"/>
<line x1="931.2" y1="292.4" x2="931.2" y2="304.2" stroke="#e8334f" stroke-width="1.6"/>
<rect x="928.1" y="277.1" width="6.3" height="14.6" fill="#000" stroke="#e8334f" stroke-width="1.45"/>
<line x1="941.8" y1="243.2" x2="941.8" y2="262.5" stroke="#e8334f" stroke-width="1.6"/>
<line x1="941.8" y1="275.5" x2="941.8" y2="281.8" stroke="#e8334f" stroke-width="1.6"/>
<rect x="938.6" y="263.2" width="6.3" height="11.6" fill="#000" stroke="#e8334f" stroke-width="1.45"/>
<line x1="952.2" y1="217.4" x2="952.2" y2="226.5" stroke="#e8334f" stroke-width="1.6"/>
<rect x="949.1" y="227.2" width="6.3" height="35.4" fill="#000" stroke="#e8334f" stroke-width="1.45"/>
<line x1="983.8" y1="194.9" x2="983.8" y2="222.1" stroke="#e8334f" stroke-width="1.6"/>
<line x1="983.8" y1="248.4" x2="983.8" y2="253.3" stroke="#e8334f" stroke-width="1.6"/>
<rect x="980.6" y="222.8" width="6.3" height="24.9" fill="#000" stroke="#e8334f" stroke-width="1.45"/>
<line x1="1004.8" y1="245.8" x2="1004.8" y2="277.4" stroke="#e8334f" stroke-width="1.6"/>
<rect x="1000.9" y="256.7" width="7.7" height="1.6" fill="#e8334f"/>
<line x1="1025.8" y1="274.6" x2="1025.8" y2="291.5" stroke="#e8334f" stroke-width="1.6"/>
<line x1="1025.8" y1="303.7" x2="1025.8" y2="308.7" stroke="#e8334f" stroke-width="1.6"/>
<rect x="1022.6" y="292.2" width="6.3" height="10.8" fill="#000" stroke="#e8334f" stroke-width="1.45"/>
<line x1="1057.2" y1="316.2" x2="1057.2" y2="326" stroke="#e8334f" stroke-width="1.6"/>
<line x1="1057.2" y1="342.6" x2="1057.2" y2="344.7" stroke="#e8334f" stroke-width="1.6"/>
<rect x="1054.1" y="326.7" width="6.3" height="15.2" fill="#000" stroke="#e8334f" stroke-width="1.45"/>
<line x1="1120.2" y1="361.6" x2="1120.2" y2="365.1" stroke="#e8334f" stroke-width="1.6"/>
<line x1="1120.2" y1="405.8" x2="1120.2" y2="416.7" stroke="#e8334f" stroke-width="1.6"/>
<rect x="1117.1" y="365.8" width="6.3" height="39.3" fill="#000" stroke="#e8334f" stroke-width="1.45"/>
<line x1="1130.8" y1="320.7" x2="1130.8" y2="348.8" stroke="#e8334f" stroke-width="1.6"/>
<line x1="1130.8" y1="363.3" x2="1130.8" y2="379.5" stroke="#e8334f" stroke-width="1.6"/>
<rect x="1127.6" y="349.5" width="6.3" height="13.1" fill="#000" stroke="#e8334f" stroke-width="1.45"/>
<line x1="1151.8" y1="319.8" x2="1151.8" y2="340.9" stroke="#e8334f" stroke-width="1.6"/>
<line x1="1151.8" y1="376.3" x2="1151.8" y2="380.9" stroke="#e8334f" stroke-width="1.6"/>
<rect x="1148.6" y="341.6" width="6.3" height="34" fill="#000" stroke="#e8334f" stroke-width="1.45"/>
<line x1="1204.2" y1="427.6" x2="1204.2" y2="452.6" stroke="#e8334f" stroke-width="1.6"/>
<rect x="1200.4" y="448.9" width="7.7" height="3.1" fill="#e8334f"/>
<line x1="1214.8" y1="417.1" x2="1214.8" y2="423.9" stroke="#e8334f" stroke-width="1.6"/>
<line x1="1214.8" y1="453.9" x2="1214.8" y2="454.7" stroke="#e8334f" stroke-width="1.6"/>
<rect x="1211.6" y="424.6" width="6.3" height="28.6" fill="#000" stroke="#e8334f" stroke-width="1.45"/>
<line x1="1225.2" y1="394.6" x2="1225.2" y2="406.9" stroke="#e8334f" stroke-width="1.6"/>
<line x1="1225.2" y1="421.9" x2="1225.2" y2="430.3" stroke="#e8334f" stroke-width="1.6"/>
<rect x="1222.1" y="407.6" width="6.3" height="13.6" fill="#000" stroke="#e8334f" stroke-width="1.45"/>
<line x1="1235.8" y1="377.8" x2="1235.8" y2="395" stroke="#e8334f" stroke-width="1.6"/>
<line x1="1235.8" y1="405.7" x2="1235.8" y2="411" stroke="#e8334f" stroke-width="1.6"/>
<rect x="1232.6" y="395.7" width="6.3" height="9.3" fill="#000" stroke="#e8334f" stroke-width="1.45"/>
<line x1="1246.2" y1="363.1" x2="1246.2" y2="366.2" stroke="#e8334f" stroke-width="1.6"/>
<line x1="1246.2" y1="393.4" x2="1246.2" y2="402.2" stroke="#e8334f" stroke-width="1.6"/>
<rect x="1243.1" y="366.9" width="6.3" height="25.8" fill="#000" stroke="#e8334f" stroke-width="1.45"/>
<line x1="1256.8" y1="349.4" x2="1256.8" y2="355.7" stroke="#e8334f" stroke-width="1.6"/>
<line x1="1256.8" y1="365.4" x2="1256.8" y2="373.2" stroke="#e8334f" stroke-width="1.6"/>
<rect x="1253.6" y="356.4" width="6.3" height="8.3" fill="#000" stroke="#e8334f" stroke-width="1.45"/>
<line x1="1267.2" y1="316.2" x2="1267.2" y2="330.3" stroke="#e8334f" stroke-width="1.6"/>
<line x1="1267.2" y1="356.5" x2="1267.2" y2="361.5" stroke="#e8334f" stroke-width="1.6"/>
<rect x="1264.1" y="331" width="6.3" height="24.8" fill="#000" stroke="#e8334f" stroke-width="1.45"/>
<line x1="1277.8" y1="298.1" x2="1277.8" y2="346.4" stroke="#e8334f" stroke-width="1.6"/>
<rect x="1273.9" y="328.4" width="7.7" height="3.1" fill="#e8334f"/>
<line x1="1288.2" y1="301.3" x2="1288.2" y2="315.4" stroke="#e8334f" stroke-width="1.6"/>
<line x1="1288.2" y1="327.6" x2="1288.2" y2="342.9" stroke="#e8334f" stroke-width="1.6"/>
<rect x="1285.1" y="316.1" width="6.3" height="10.8" fill="#000" stroke="#e8334f" stroke-width="1.45"/>
<line x1="1309.2" y1="310.4" x2="1309.2" y2="318.3" stroke="#e8334f" stroke-width="1.6"/>
<line x1="1309.2" y1="332" x2="1309.2" y2="359.2" stroke="#e8334f" stroke-width="1.6"/>
<rect x="1306.1" y="319" width="6.3" height="12.3" fill="#000" stroke="#e8334f" stroke-width="1.45"/>
<line x1="1319.8" y1="289.6" x2="1319.8" y2="306.2" stroke="#e8334f" stroke-width="1.6"/>
<line x1="1319.8" y1="317.1" x2="1319.8" y2="324.1" stroke="#e8334f" stroke-width="1.6"/>
<rect x="1316.6" y="306.9" width="6.3" height="9.5" fill="#000" stroke="#e8334f" stroke-width="1.45"/>
<line x1="1330.2" y1="261" x2="1330.2" y2="271.5" stroke="#e8334f" stroke-width="1.6"/>
<rect x="1327.1" y="272.2" width="6.3" height="38.1" fill="#000" stroke="#e8334f" stroke-width="1.45"/>
<line x1="1340.8" y1="236.4" x2="1340.8" y2="255.2" stroke="#e8334f" stroke-width="1.6"/>
<line x1="1340.8" y1="272.4" x2="1340.8" y2="280.8" stroke="#e8334f" stroke-width="1.6"/>
<rect x="1337.6" y="255.9" width="6.3" height="15.8" fill="#000" stroke="#e8334f" stroke-width="1.45"/>
<path d="M101.4 558.9C103.9 558.9 108 559.5 116.3 558.9C124.6 558.3 135.3 556.1 151.4 555.4C167.5 554.7 190.9 555.1 212.8 554.9C234.7 554.7 266.9 554.6 283 554C299.1 553.4 298.1 552.2 309.3 551.4C320.5 550.6 335.1 550.6 350 549.1C364.9 547.6 383.8 543.9 398.8 542.1C413.8 540.3 421.4 541.6 440 538.1C458.6 534.6 492.6 525.2 510.2 521.2C527.8 517.2 533.6 516.2 545.3 514.2C557 512.2 562.9 510.8 580.4 508.9C597.9 507 627.1 505.4 650.5 502.6C673.9 499.8 700.2 495.6 720.7 492.1C741.2 488.6 755.8 484.4 773.3 481.6C790.8 478.9 805.5 477.5 826 475.6C846.5 473.7 873.8 472.3 896.1 470.4C918.4 468.5 921 468.4 960 464.4C999 460.4 1092.9 450.3 1130 446.3C1167.1 442.3 1165 442.2 1182.6 440.4C1200.1 438.6 1217.8 436.9 1235.3 435.4C1252.8 433.8 1268.8 432.8 1287.9 431.1C1307.1 429.4 1339.8 426.3 1350.2 425.3" fill="none" stroke="#e03a3a" stroke-width="1.35" stroke-linejoin="round"/>
<path d="M101.4 551.4C108.3 550.3 129.9 546.4 142.6 544.9C155.3 543.4 163.1 542.6 177.7 542.1C192.3 541.6 209.3 541.8 230.4 541.8C251.5 541.8 287.9 542.4 304 541.8C320.1 541.2 319.1 539.2 326.8 538.2C334.5 537.2 338 538 350 535.6C362 533.2 383.8 527.8 398.8 524.1C413.8 520.4 427.3 517.4 440 513.5C452.7 509.6 463.4 505.2 475.1 500.9C486.8 496.6 497.3 492.8 510.2 487.9C523.1 483 537.7 476 552.3 471.4C566.9 466.8 581.5 464 597.9 460.5C614.3 457 635.9 453.7 650.5 450.4C665.1 447.1 673.9 443.6 685.6 440.5C697.3 437.4 709 435.9 720.7 431.8C732.4 427.7 744.1 419.8 755.8 416C767.5 412.2 779.2 411.2 790.9 408.9C802.6 406.5 811.4 404.5 826 401.9C840.6 399.3 864.1 395.9 878.6 393.2C893.1 390.4 901.2 388.1 912.8 385.4C924.3 382.6 939.1 379.2 947.9 376.7C956.7 374.2 956.6 373 965.4 370.5C974.2 368 991.4 364.2 1000.5 361.8C1009.6 359.4 1010.9 358.3 1020 355.8C1029.1 353.3 1043.4 349.3 1055.1 347C1066.8 344.7 1078.5 343.3 1090.2 341.8C1101.9 340.3 1113.6 339.4 1125.3 338.2C1137 337 1148.7 335.7 1160.4 334.7C1172.1 333.7 1183.5 333.1 1195.4 332.1C1207.3 331.1 1220.6 330 1231.6 328.5C1242.6 327 1252.6 324.2 1261.4 322.9C1270.2 321.6 1276.9 321.6 1284.2 320.6C1291.5 319.6 1298.9 318.4 1305.3 317.1C1311.7 315.8 1316.9 313.9 1322.8 312.7C1328.7 311.4 1335.8 310.5 1340.4 309.6C1345 308.7 1348.8 307.9 1350.5 307.5" fill="none" stroke="#8a8a8a" stroke-width="1.35" stroke-linejoin="round"/>
<path d="M101.4 550.5C111.2 549.1 146 543.9 160.2 542.1C174.4 540.3 174.8 540.1 186.5 539.6C198.2 539.1 220.2 540.1 230.4 539.1C240.6 538.1 239.1 536.1 247.9 533.9C256.7 531.7 271.3 528.5 283 526C294.7 523.5 306.9 520.9 318.1 518.9C329.3 516.9 340.8 515.1 350 513.8C359.2 512.5 365 513.4 373.1 511.2C381.2 509.1 390.2 504.5 398.8 500.9C407.4 497.3 417.6 492.6 424.5 489.4C431.4 486.2 434.1 484.6 440 481.6C445.9 478.6 454.1 474.7 460 471.4C465.9 468.1 466.7 467 475.1 461.6C483.5 456.2 498.5 446.4 510.2 438.8C521.9 431.2 534.8 422 545.3 416C555.8 410 561.6 407.7 573.3 403C585 398.3 602.5 392 615.4 387.9C628.3 383.8 638.8 381.6 650.5 378.4C662.2 375.2 675.6 371.1 685.6 368.6C695.6 366.1 701.4 366.2 710.2 363.3C719 360.4 729.4 355.2 738.2 351.1C747 347 755.2 342 762.8 338.8C770.4 335.6 776.8 334.2 783.9 331.8C791 329.4 798.7 326.8 805.6 324.2C812.5 321.6 818.9 318.2 825.1 316.1C831.3 314 835.3 313.4 842.6 311.8C849.9 310.2 860.1 308.3 868.9 306.5C877.7 304.7 886.5 303.2 895.3 301.2C904.1 299.1 912.8 296.7 921.6 294.2C930.4 291.7 938.4 289.1 947.9 286.3C957.4 283.5 969.3 279.5 978.9 277.4C988.5 275.3 996.5 274.6 1005.3 273.9C1014.1 273.2 1022.8 272.7 1031.6 273C1040.4 273.3 1049.1 274.4 1057.9 275.6C1066.7 276.8 1075.4 277.8 1084.2 280C1093 282.2 1101.7 285.9 1110.5 288.8C1119.3 291.7 1128.5 294.7 1136.8 297.5C1145 300.3 1154.6 303.6 1160 305.4C1165.4 307.2 1163.2 306.4 1169.1 308.4C1175 310.4 1188.1 315 1195.4 317.2C1202.7 319.4 1207 320.6 1213 321.6C1219 322.6 1223.5 323.1 1231.6 323.2C1239.7 323.3 1252.1 322.7 1261.4 322.4C1270.8 322.1 1272.9 321.6 1287.7 321.5C1302.5 321.4 1340 321.5 1350.5 321.5" fill="none" stroke="#22d022" stroke-width="1.35" stroke-linejoin="round"/>
<path d="M101.4 531.6C111.2 530.4 140.2 526 160.2 524.2C180.2 522.5 207 522.7 221.6 521.1C236.2 519.5 237.7 517 247.9 514.6C258.1 512.2 271.3 510.1 283 506.7C294.7 503.3 306.9 498.5 318.1 494.4C329.3 490.2 340.8 484.8 350 481.8C359.2 478.8 365 479.3 373.1 476.5C381.2 473.7 390.2 469.6 398.8 464.9C407.4 460.2 416.3 454.2 424.5 448.2C432.7 442.2 442 434.4 447.9 429C453.8 423.6 452.7 423.5 460 416C467.3 408.5 482.1 395.1 491.8 384.2C501.5 373.3 510.1 360.8 518 350.9C525.9 341 532.9 331.7 539.1 324.6C545.3 317.6 549.8 313.5 555.4 308.6C561 303.7 566.3 299.3 573 295.4C579.7 291.4 588.5 287.8 595.8 284.9C603.1 282 609.4 280.1 616.8 277.9C624.2 275.6 633.4 272.9 640 271.4C646.6 269.9 649.4 269.9 656.5 268.9C663.6 267.9 674 266.7 682.8 265.4C691.6 264.1 700.3 262.7 709.1 261.1C717.9 259.5 728.1 257.7 735.4 255.8C742.7 253.9 748.3 251.1 753 249.6C757.7 248.1 759.1 246.4 763.5 246.7C767.9 247 773.8 249.5 779.3 251.4C784.8 253.3 790.6 255.4 796.8 258.4C803 261.4 809.8 265.5 816.3 269.6C822.8 273.7 829.2 278.3 835.6 282.8C842 287.3 849.4 293.3 854.9 296.8C860.4 300.3 863.9 301.8 868.9 303.9C873.9 305.9 879.7 307.8 884.7 309.1C889.7 310.4 894.1 311.7 898.8 311.8C903.5 311.9 907.5 311 912.8 310C918.1 309 924.5 307.4 930.4 305.6C936.2 303.9 942.1 301.7 947.9 299.5C953.7 297.3 958.8 295 965.4 292.5C972 290 981.1 286.3 987.7 284.4C994.4 282.5 999.4 281 1005.3 280.9C1011.1 280.8 1016.9 282.2 1022.8 283.5C1028.7 284.8 1034.6 286.5 1040.4 288.8C1046.2 291.1 1052.1 294.3 1057.9 297.5C1063.7 300.7 1069.6 305.3 1075.4 308.1C1081.2 310.9 1086.2 312.2 1093 314.2C1099.8 316.1 1108.2 318.6 1116.5 319.8C1124.8 321 1134.6 321.6 1142.8 321.6C1151 321.6 1158.3 319.2 1165.6 319.8C1172.9 320.4 1178.8 322.9 1186.7 325.1C1194.6 327.3 1204.2 330.4 1213 333C1221.8 335.6 1230.5 338.4 1239.3 340.9C1248.1 343.4 1257.5 345.7 1265.6 347.9C1273.7 350.1 1282.3 352.2 1287.7 353.9C1293.1 355.6 1293.8 356.9 1298.2 358C1302.6 359.1 1308.4 360 1314 360.4C1319.6 360.8 1326.6 360.5 1331.6 360.1C1336.6 359.8 1340.8 359 1343.9 358.3C1347.1 357.6 1349.4 356.1 1350.5 355.7" fill="none" stroke="#d422d4" stroke-width="1.35" stroke-linejoin="round"/>
<path d="M101.4 490C102.1 489.8 111 486.4 112.3 486C113.6 485.6 121.5 483.8 122.8 483.5C124.1 483.2 132 481.9 133.3 481.8C134.6 481.7 142.6 482 143.9 482.1C145.2 482.2 153.1 483.6 154.4 483.9C155.7 484.2 163.6 486 164.9 486.5C166.2 487 174.1 491.7 175.4 492.6C176.7 493.5 184.7 501.3 186 502.3C187.3 503.3 195.2 508.7 196.5 509.3C197.8 509.9 205.7 512.4 207 512.8C208.3 513.2 216.2 515.5 217.5 515.8C218.8 516.1 226.8 517.2 228.1 517.2C229.4 517.2 237.3 516 238.6 515.8C239.9 515.6 247.8 513.9 249.1 513.7C250.4 513.5 258.3 511.9 259.6 511.9C260.9 511.9 268.9 513.6 270.2 513.7C271.5 513.8 279.4 514.1 280.7 513.7C282 513.3 289.9 507.9 291.2 506.7C292.5 505.5 300.5 495.8 301.8 494.4C303.1 493 311 485.2 312.3 483.9C313.6 482.6 321.2 474.7 322.8 473.3C324.4 471.9 337.5 462.4 339.1 461.1C340.7 459.8 348.4 453 350 451.4C351.6 449.8 363.2 438 365.4 435.1C367.6 432.2 384.2 407.3 386.5 403.5C388.8 399.7 401.7 375.9 404 371.9C406.3 367.9 423.1 339.9 425.1 336.8C427.1 333.7 435.4 323.7 437.4 321C439.4 318.3 456.6 294.8 458.9 291C461.2 287.2 474.7 260.7 476.5 257.7C478.3 254.7 487 242.8 488.8 240.2C490.6 237.6 504.6 217 506.3 214.7C508 212.4 515.7 203.5 517.2 201.6C518.7 199.7 529.6 184 531.2 182.3C532.8 180.6 542.2 173.7 543.5 172.6C544.8 171.5 552.3 164.7 553.5 164.7C554.7 164.7 561.5 170.9 562.8 171.8C564.1 172.7 573.7 178.3 575.1 179.6C576.5 180.9 584.2 190.4 585.6 192.8C587 195.2 597.3 217.2 598.8 220C600.3 222.8 608.8 237.5 610 240C611.2 242.5 618.4 258.2 619.6 261.1C620.8 264 628.8 286.1 630.2 289.1C631.6 292.1 640.9 309.4 642.5 311.9C644.1 314.4 654.9 329.4 656.5 331.2C658.1 333 667.4 341.7 668.8 342.6C670.2 343.5 678 346.8 679.3 347C680.6 347.2 688.3 346 689.8 345.3C691.3 344.6 702.2 336.2 703.9 334.7C705.6 333.2 716.4 322.4 717.9 320.7C719.4 319 727 309 728.4 306.7C729.8 304.4 739.2 285.2 740.7 282.1C742.2 279 751.7 258.2 753 255.8C754.3 253.4 761.3 242.7 762.5 241.5C763.7 240.3 771.6 236.6 773 236C774.4 235.4 783.9 231.4 785.3 231.2C786.7 231 794.4 232.7 795.8 233.3C797.2 233.9 806.7 239.4 808.1 240.4C809.5 241.4 818.2 248.8 819.5 250C820.8 251.2 828.8 257.5 830.4 260C832 262.5 844.4 288.1 846.1 291.6C847.8 295.1 857.1 315.2 858.4 317.9C859.7 320.6 866.8 335.6 868.1 337.2C869.4 338.8 878.2 343.4 879.5 344.2C880.8 345 888.7 350.6 890 351.2C891.3 351.8 899.2 354.6 900.5 354.7C901.8 354.8 909.8 352.6 911.1 352.1C912.4 351.6 920.3 347.5 921.6 346.8C922.9 346.1 930.8 341.7 932.1 340.7C933.4 339.7 941.3 331.8 942.6 330.2C943.9 328.6 951.9 316.1 953.2 314.4C954.5 312.7 962.4 303.6 963.7 302.1C965 300.6 972.9 291.5 974.2 289.8C975.5 288.1 983.5 275.4 984.7 274C985.9 272.6 993 266.9 994.2 266C995.4 265.1 1003.4 259.5 1004.7 258.9C1006 258.3 1014 256.8 1015.3 256.7C1016.6 256.6 1024.5 256.9 1025.8 257.2C1027.1 257.5 1035 260.9 1036.3 261.6C1037.6 262.3 1045.4 268.3 1046.7 269.5C1048 270.7 1055.9 279.6 1057.2 280.9C1058.5 282.2 1066.4 289.4 1067.7 290.5C1069 291.6 1076.9 298.6 1078.2 300C1079.5 301.4 1087.5 312.8 1088.8 314.6C1090.1 316.4 1098 328.7 1099.3 330.4C1100.6 332.1 1108.5 342.3 1109.8 343.5C1111.1 344.7 1118.9 348.9 1120.2 349.6C1121.5 350.3 1129.4 354.2 1130.7 354.9C1132 355.6 1139.9 361.6 1141.2 361.9C1142.5 362.2 1150.5 360 1151.8 360.2C1153.1 360.4 1161 364.8 1162.3 365.4C1163.6 366 1171.5 369.8 1172.8 370.7C1174.1 371.6 1182 380.2 1183.3 381.2C1184.6 382.2 1192.4 386.8 1193.7 387.4C1195 388 1202.9 391.4 1204.2 391.8C1205.5 392.2 1213.4 394 1214.7 394.4C1216 394.8 1224 398.2 1225.3 398.8C1226.6 399.4 1234.5 404.7 1235.8 404.9C1237.1 405.1 1245 402.4 1246.3 402.3C1247.6 402.2 1255.5 404.2 1256.8 404C1258.1 403.8 1266.1 400.2 1267.4 399.6C1268.7 399 1277 394.9 1277.9 394.2C1278.8 393.5 1281.7 389.2 1282.6 388.1C1283.5 387.1 1291.6 378.7 1293.2 376.7C1294.8 374.7 1307.5 357.1 1309.3 354.8C1311.1 352.5 1321.3 340.8 1322.8 339C1324.3 337.2 1333.5 326.8 1335.1 325C1336.7 323.2 1348.3 309.9 1349.1 308.9" fill="none" stroke="#d6d61e" stroke-width="1.35" stroke-linejoin="round"/>
<path d="M101.4 466.3C102.1 466.7 111 471.6 112.3 472.5C113.6 473.4 121.5 480.9 122.8 482.1C124.1 483.3 132 491.6 133.3 492.6C134.6 493.7 142.6 499 143.9 499.6C145.2 500.2 153.1 501.7 154.4 501.8C155.7 501.9 163.6 500.5 164.9 500.5C166.2 500.5 174.1 500.8 175.4 501.4C176.7 502 184.7 509.2 186 510.2C187.3 511.2 195.2 517.4 196.5 518.1C197.8 518.8 205.7 521.7 207 522.5C208.3 523.3 216.2 530.6 217.5 531.2C218.8 531.8 226.8 533.5 228.1 533C229.4 532.5 237.3 523.9 238.6 522.5C239.9 521.1 247.8 511.5 249.1 510.2C250.4 508.9 258.3 502.2 259.6 501.4C260.9 500.6 268.9 497.5 270.2 497C271.5 496.5 279.4 492.6 280.7 492.3C282 492 289.9 492.8 291.2 492.3C292.5 491.8 300.5 485.7 301.8 484.7C303.1 483.7 311 476.5 312.3 475.1C313.6 473.7 321.5 463.2 322.8 461.1C324.1 459 332.7 442.2 333.9 440C335.1 437.8 341.4 426.4 342.6 424.6C343.8 422.8 352.1 413.2 354 410.5C355.9 407.8 372.3 382.3 374.2 379.8C376.1 377.3 384.3 371 385.6 369.3C386.9 367.6 393.9 353.7 395.3 350.9C396.7 348.1 407.6 326.4 409.3 322.8C411 319.2 422.2 294 423.9 291C425.6 288 436.4 274.8 437.9 273.5C439.4 272.2 447.1 270.2 448.4 269.1C449.7 268.1 457.6 257.7 458.9 256C460.2 254.3 468.2 242.1 469.5 240.2C470.8 238.3 478.7 226.5 480 224.4C481.3 222.3 489.2 207.8 490.5 205.1C491.8 202.4 500.7 182.5 502.1 179.7C503.5 176.8 512.5 159.6 513.7 157.7C514.9 155.8 521.3 148.3 522.5 147.2C523.7 146.1 532.6 140.1 533.9 139.8C535.2 139.5 542.3 141.5 543.5 141.9C544.7 142.3 552.3 145.8 553.2 147.2C554.1 148.6 558.4 162.1 559.3 164.7C560.2 167.3 567 187.8 568.1 191.1C569.2 194.4 576.8 217.1 577.7 220C578.6 222.9 581.8 236.2 582.8 240C583.8 243.8 593.7 279.5 595.1 283.9C596.5 288.3 604.3 311 605.6 313.7C606.9 316.4 614.8 327.5 616.1 329.5C617.4 331.5 625.4 345.4 626.7 347C628 348.6 635.7 355.3 637.2 355.8C638.7 356.3 649.2 355.9 651.2 355.8C653.2 355.7 668.7 354.9 670.5 354.4C672.3 353.9 679.9 348.2 681.1 347C682.3 345.8 688.6 336.4 689.8 334.7C691 333 699.1 320.8 700.4 318.9C701.7 317 709.6 305.5 710.9 303.2C712.2 300.9 720.1 283.4 721.4 280.4C722.7 277.4 730.7 257.5 731.9 254C733.1 250.5 740.2 226.4 741.4 222.8C742.6 219.2 750.6 197.4 751.9 194.7C753.2 192 761.9 177.4 763.3 177.2C764.7 177 773.4 189.1 774.7 191.2C776 193.3 784.2 209.8 785.3 212.3C786.4 214.8 791.6 231 792.3 233.3C793 235.6 796.2 248.4 796.7 250C797.2 251.6 799.9 257.6 800.5 260C801.1 262.4 806.6 286.4 807.5 289.8C808.4 293.2 815.1 314.1 816.3 316.1C817.5 318.1 825.5 322.1 826.8 323.2C828.1 324.3 836.1 332.2 837.4 333.7C838.7 335.2 846.6 346.4 847.9 347.7C849.2 349 857.1 354.7 858.4 355.6C859.7 356.5 867.6 361.8 868.9 362.6C870.2 363.4 878.2 368.1 879.5 368.4C880.8 368.7 888.7 367.4 890 367C891.3 366.6 899.2 362.9 900.5 361.8C901.8 360.8 909.8 351.4 911.1 349.5C912.4 347.6 920.3 332.6 921.6 330.2C922.9 327.8 930.7 311.9 932.1 309.1C933.5 306.3 944.4 285.9 945.6 283.5C946.8 281.1 951.5 271.2 952.6 269.5C953.7 267.8 961.9 256.8 963.2 255.4C964.5 254 972.5 247.8 973.7 246.7C974.9 245.6 982.7 238.1 983.9 237.5C985.1 236.9 993 237.2 994.2 237.5C995.4 237.8 1003.4 241.1 1004.7 242.3C1006 243.5 1014 255.8 1015.3 257.2C1016.6 258.6 1024.5 264.3 1025.8 266C1027.1 267.7 1035 283.1 1036.3 285.3C1037.6 287.5 1045.4 301 1046.7 302.8C1048 304.6 1055.9 314 1057.2 315.1C1058.5 316.2 1066.4 319.3 1067.7 320.4C1069 321.5 1076.9 332.4 1078.2 333.9C1079.5 335.4 1087.5 344.6 1088.8 346.1C1090.1 347.6 1098 356.8 1099.3 358.4C1100.6 360 1108.5 371.3 1109.8 372.5C1111.1 373.7 1118.9 378.3 1120.2 378.6C1121.5 378.9 1129.4 377 1130.7 376.8C1132 376.6 1139.9 376.7 1141.2 376C1142.5 375.3 1150.5 366.3 1151.8 365.4C1153.1 364.5 1161 360.3 1162.3 360.2C1163.6 360.1 1171.5 362.4 1172.8 363.7C1174.1 365 1182 379.2 1183.3 381.2C1184.6 383.2 1192.4 394.9 1193.7 397C1195 399.1 1202.9 414.4 1204.2 416.3C1205.5 418.2 1213.4 427.5 1214.7 428.6C1216 429.7 1224 435 1225.3 434.7C1226.6 434.4 1234.5 424.9 1235.8 423.3C1237.1 421.7 1245 409.8 1246.3 407.5C1247.6 405.2 1255.5 387.1 1256.8 384.7C1258.1 382.3 1266.2 369.1 1267.4 367.2C1268.6 365.3 1276 354.8 1277.2 353.1C1278.4 351.4 1286.4 340.4 1287.7 339C1289 337.6 1297.5 331.2 1298.8 330.3C1300.1 329.4 1308 323.9 1309.3 323.2C1310.6 322.5 1318.5 318.9 1319.8 318C1321.1 317.1 1328.9 309 1330.2 307.5C1331.5 306 1339.5 294.9 1340.7 293.4C1341.9 291.9 1349.4 283.2 1350 282.5" fill="none" stroke="#e6e6e6" stroke-width="1.35" stroke-linejoin="round"/>
<path d="M528 101.2H539M532.6 97V105" stroke="#f0f0f0" stroke-width="1.6" fill="none"/>
<path d="M192.5 564.9H203M196.3 561V566" stroke="#f0f0f0" stroke-width="1.6" fill="none"/>
<path d="M1190 471.9H1201M1193.8 468V473" stroke="#f0f0f0" stroke-width="1.6" fill="none"/>
<path d="M1337 236.4H1353.5M1351.3 232.3V238.5" stroke="#f0f0f0" stroke-width="1.6" fill="none"/>
<path d="M101.8 734.6L112.2 731.1L122.8 733.4L133.2 736.3L143.8 738.2L154.2 738.2L164.8 730.6L175.2 738.2L185.8 751.9L196.2 751.9L206.8 747.6L217.2 746L227.8 740.5L238.2 735.1L248.8 733L259.2 733L269.8 740.5L280.2 735.8L290.8 735.3L301.2 721.2L311.8 718.8L322.2 715.7L332.8 705.6L343.2 714.5L353.8 709.8L364.2 705.1L374.8 702.2L385.2 699.2L395.8 690.9L406.2 688.5L416.8 687.4L427.2 683.3L437.8 681.9L448.2 696.1L458.8 687.8L469.2 685L479.8 680.7L490.2 680.3L500.8 681.9L511.2 675.5L521.8 678.4L532.2 678.8L542.8 692.5L553.2 707.9L563.8 731.5L574.2 729.9L584.8 741L595.2 750.4L605.8 747.4L616.2 750.4L626.8 752.1L637.2 752.1L647.8 749.3L658.2 744.5L668.8 750.4L679.2 745L689.8 734.6L700.2 732.2L710.8 726.1L721.2 723.3L731.8 715L742.2 706.7L752.8 704.8L763.2 713.3L773.8 747.4L784.2 743.4L794.8 746.9L805.2 747.4L815.8 752.8L826.2 752.1L836.8 755.2L847.2 758.2L857.8 756.8L868.2 759.9L878.8 759.2L889.2 752.8L899.8 752.1L910.2 741.5L920.8 738.2L931.2 734.6L941.8 730.8L952.2 725.2L962.8 726.8L973.2 731.5L983.8 725.6L994.2 734.6L1004.8 736.3L1015.2 746.4L1025.8 743.4L1036.2 749.3L1046.8 755.2L1057.2 751.2L1067.8 753.5L1078.2 756.8L1088.8 761.1L1099.2 765.5L1109.8 768.4L1120.2 757.9L1130.8 752.1L1141.2 759.9L1151.8 750L1162.2 756.8L1172.8 758.7L1183.2 770.1L1193.8 771.7L1204.2 771.7L1214.8 764.6L1225.2 760.6L1235.8 757.5L1246.2 749.3L1256.8 746.4L1267.2 740.3L1277.8 739.8L1288.2 737L1298.8 741.5L1309.2 739.8L1319.8 737L1330.2 726.8L1340.8 723.7L1351.2 725.2" fill="none" stroke="#d422d4" stroke-width="1.35" stroke-linejoin="round"/>
<path d="M101.8 735.8L112.2 729.9L122.8 732.3L133.2 740.5L143.8 743.4L154.2 741.7L164.8 727.5L175.2 742.9L185.8 766.5L196.2 770.6L206.8 757.1L217.2 753.5L227.8 740.5L238.2 728.7L248.8 725.2L259.2 725.2L269.8 741.7L280.2 733L290.8 730.6L301.2 703.2L311.8 702.7L322.2 696.8L332.8 680.3L343.2 699.9L353.8 688.5L364.2 682.6L374.8 677.4L385.2 672.5L395.8 666.1L406.2 662.5L416.8 660.7L427.2 655.9L437.8 656.2L448.2 691.4L458.8 672.5L469.2 668.9L479.8 664.2L490.2 662.3L500.8 667.7L511.2 659.5L521.8 663.7L532.2 664.2L542.8 699.6L553.2 718.5L563.8 756.8L574.2 752.3L584.8 769.4L595.2 780L605.8 774.8L616.2 778.8L626.8 780.5L637.2 781.9L647.8 775.3L658.2 761.1L668.8 774.8L679.2 757.5L689.8 737.4L700.2 732.7L710.8 720.9L721.2 717.4L731.8 704.4L742.2 689.7L752.8 685L763.2 707.9L773.8 762.3L784.2 754L794.8 758.7L805.2 760.6L815.8 767.7L826.2 768.6L836.8 772.9L847.2 778.1L857.8 773.4L868.2 777.6L878.8 777.6L889.2 763.4L899.8 759.9L910.2 739.3L920.8 733.2L931.2 725.6L941.8 719.7L952.2 707.2L962.8 711.9L973.2 720.9L983.8 710.3L994.2 733.2L1004.8 731.5L1015.2 755.2L1025.8 750.4L1036.2 761.1L1046.8 771.7L1057.2 761.1L1067.8 763.4L1078.2 771L1088.8 779.5L1099.2 790.6L1109.8 793L1120.2 763.4L1130.8 754.5L1141.2 769.4L1151.8 751.6L1162.2 765.3L1172.8 768.2L1183.2 786.6L1193.8 788.3L1204.2 787.6L1214.8 771L1225.2 763.9L1235.8 757.5L1246.2 740.3L1256.8 735.6L1267.2 725.2L1277.8 723.3L1288.2 718.1L1298.8 729.2L1309.2 722.8L1319.8 717.4L1330.2 702L1340.8 696.8L1351.2 699.6" fill="none" stroke="#d6d61e" stroke-width="1.35" stroke-linejoin="round"/>
<path d="M101.8 752.8L112.2 738.2L122.8 746.4L133.2 761.8L143.8 766.1L154.2 763L164.8 720.4L175.2 754.7L185.8 798.4L196.2 802L206.8 771.3L217.2 763L227.8 738.2L238.2 708.6L248.8 703.2L259.2 705.6L269.8 748.3L280.2 727.5L290.8 722.1L301.2 674.4L311.8 674.4L322.2 664.9L332.8 648.4L343.2 689.7L353.8 674.4L364.2 664.9L374.8 657.8L385.2 651.9L395.8 643.6L406.2 641.3L416.8 638.9L427.2 634.7L437.8 634.8L448.2 705.5L458.8 670.1L469.2 664.2L479.8 655.9L490.2 654.7L500.8 665.4L511.2 651.7L521.8 659L532.2 661.1L542.8 730.4L553.2 756.4L563.8 804.8L574.2 796.1L584.8 813.1L595.2 822.5L605.8 810.7L616.2 815L626.8 817.8L637.2 819.7L647.8 796.5L658.2 765.8L668.8 789.4L679.2 756.4L689.8 716.2L700.2 707.9L710.8 690.2L721.2 683.1L731.8 666.5L742.2 653.5L752.8 648.3L763.2 690.2L773.8 784.2L784.2 770.5L794.8 778.8L805.2 780.5L815.8 792.3L826.2 791.3L836.8 797.7L847.2 806L857.8 794.2L868.2 803.2L878.8 801.3L889.2 759.9L899.8 752.8L910.2 706.7L920.8 698.5L931.2 685.5L941.8 677.2L952.2 660.6L962.8 673.6L973.2 702.5L983.8 683.1L994.2 737L1004.8 734.6L1015.2 777.6L1025.8 761.6L1036.2 780L1046.8 798.4L1057.2 777.2L1067.8 781.2L1078.2 795.4L1088.8 810.7L1099.2 819.7L1109.8 823L1120.2 761.1L1130.8 743.4L1141.2 771.7L1151.8 733.9L1162.2 759.9L1172.8 768.2L1183.2 804.8L1193.8 807.9L1204.2 804.8L1214.8 770.5L1225.2 751.6L1235.8 737L1246.2 711L1256.8 702L1267.2 685.9L1277.8 684.3L1288.2 675.5L1298.8 709.6L1309.2 696.1L1319.8 685L1330.2 666.5L1340.8 659L1351.2 668.4" fill="none" stroke="#e6e6e6" stroke-width="1.35" stroke-linejoin="round"/>
<rect x="1393" y="259" width="100" height="25" fill="#000" stroke="#e4922e" stroke-width="2"/>
<path d="M1486 247.500L1481.8 259H1486Z" fill="#e4922e"/>
<circle cx="3.5" cy="611.5" r="4.6" fill="#fff"/><circle cx="3.5" cy="611.5" r="2.8" fill="#f00"/>
<path d="M2.8 601V605M2.8 619.5V623M11 611.3H14.3M9.3 606L12.8 603M9.3 618L12.8 621" stroke="#f00" stroke-width="1.5" fill="none"/>
<rect x="246" y="16.5" width="17" height="17.5" fill="#7a7a7a"/>
<rect x="244.8" y="15.3" width="16.4" height="17" fill="#fff" stroke="#2222aa" stroke-width="1.6"/>
<path d="M246 25L249 19.5L251.5 23L254 20.5L256.5 22.5L260 19.5" stroke="#f01818" stroke-width="1.6" fill="none"/>
<path d="M246 29.5L249 24.5L251.5 27.5L254 25L256.5 27.5L260 25" stroke="#1818f0" stroke-width="1.6" fill="none"/>
<rect x="1181.5" y="12.5" width="111" height="23" fill="none" stroke="#8c8c8c" stroke-width="1.4"/>
<rect x="1298.7" y="14.7" width="19.6" height="19" fill="none" stroke="#c4c4c4" stroke-width="1.5"/>
<rect x="1322.7" y="14.7" width="19.6" height="19" fill="none" stroke="#c4c4c4" stroke-width="1.5"/>
<rect x="1346.7" y="14.7" width="19.6" height="19" fill="none" stroke="#c4c4c4" stroke-width="1.5"/>
<rect x="1370.7" y="14.7" width="19.6" height="19" fill="none" stroke="#c4c4c4" stroke-width="1.5"/>
<path d="M1301.5 24.2H1306.5M1310.5 24.2H1315.5M1308.5 17V21.5M1308.5 27V31.5" stroke="#c4c4c4" stroke-width="2" fill="none"/>
<rect x="1307.3" y="23" width="2.4" height="2.4" fill="#c4c4c4"/>
<path d="M1327 17.5V31M1325.5 30H1340M1334.5 19V27" stroke="#c4c4c4" stroke-width="1.4" fill="none"/><path d="M1339.5 19.5V27L1335 23.2Z" fill="#c4c4c4"/><path d="M1325 20L1327 17L1329 20M1337.5 28L1340.5 30L1337.5 32" stroke="#c4c4c4" stroke-width="1" fill="none"/>
<path d="M1351 17.5V31M1349.5 30H1364" stroke="#c4c4c4" stroke-width="1.4" fill="none"/><path d="M1355 19V28L1363 23.5Z" fill="#c4c4c4"/><path d="M1349 20L1351 17L1353 20M1361.500 28L1364.5 30L1361.5 32" stroke="#c4c4c4" stroke-width="1" fill="none"/>
<rect x="1373.2" y="18" width="5" height="13" fill="none" stroke="#c4c4c4" stroke-width="1.4"/><path d="M1378 24.3H1385" stroke="#c4c4c4" stroke-width="2.2" fill="none"/><path d="M1383.500 20.300L1388.5 24.3L1383.5 28.3Z" fill="#c4c4c4"/>
<g>
<text x="90.3" y="49.2" font-size="18.5" fill="#e8334f" font-weight="normal" text-anchor="end">1.0167</text>
<text x="1397.5" y="49.2" font-size="18.5" fill="#e8334f" font-weight="normal" text-anchor="start">1.0167</text>
<text x="90.3" y="140.6" font-size="18.5" fill="#e8334f" font-weight="normal" text-anchor="end">0.9994</text>
<text x="1397.5" y="140.6" font-size="18.5" fill="#e8334f" font-weight="normal" text-anchor="start">0.9994</text>
<text x="90.3" y="233.7" font-size="18.5" fill="#e8334f" font-weight="normal" text-anchor="end">0.9820</text>
<text x="1397.5" y="233.7" font-size="18.5" fill="#e8334f" font-weight="normal" text-anchor="start">0.9820</text>
<text x="90.3" y="326.8" font-size="18.5" fill="#e8334f" font-weight="normal" text-anchor="end">0.9647</text>
<text x="1397.5" y="326.8" font-size="18.5" fill="#e8334f" font-weight="normal" text-anchor="start">0.9647</text>
<text x="90.3" y="419.9" font-size="18.5" fill="#e8334f" font-weight="normal" text-anchor="end">0.9473</text>
<text x="1397.5" y="419.9" font-size="18.5" fill="#e8334f" font-weight="normal" text-anchor="start">0.9473</text>
<text x="90.3" y="513" font-size="18.5" fill="#e8334f" font-weight="normal" text-anchor="end">0.9299</text>
<text x="1397.5" y="513" font-size="18.5" fill="#e8334f" font-weight="normal" text-anchor="start">0.9299</text>
<text x="90.3" y="638.9" font-size="18.5" fill="#e8334f" font-weight="normal" text-anchor="end">94.0827</text>
<text x="1397.5" y="638.9" font-size="18.5" fill="#e8334f" font-weight="normal" text-anchor="start">94.0827</text>
<text x="90.3" y="676.5" font-size="18.5" fill="#e8334f" font-weight="normal" text-anchor="end">78.9535</text>
<text x="1397.5" y="676.5" font-size="18.5" fill="#e8334f" font-weight="normal" text-anchor="start">78.9535</text>
<text x="90.3" y="714" font-size="18.5" fill="#e8334f" font-weight="normal" text-anchor="end">63.8243</text>
<text x="1397.5" y="714" font-size="18.5" fill="#e8334f" font-weight="normal" text-anchor="start">63.8243</text>
<text x="90.3" y="751.5" font-size="18.5" fill="#e8334f" font-weight="normal" text-anchor="end">48.6951</text>
<text x="1397.5" y="751.5" font-size="18.5" fill="#e8334f" font-weight="normal" text-anchor="start">48.6951</text>
<text x="90.3" y="789" font-size="18.5" fill="#e8334f" font-weight="normal" text-anchor="end">33.5660</text>
<text x="1397.5" y="789" font-size="18.5" fill="#e8334f" font-weight="normal" text-anchor="start">33.5660</text>
<text x="1397" y="278" font-size="18.5" fill="#ee9a30" font-weight="normal" text-anchor="start">0.9767</text>
<text x="539.5" y="96" font-size="18.5" fill="#ee2c44" font-weight="bold" text-anchor="start">1.0063</text>
<text x="203.2" y="581.8" font-size="18.5" fill="#2fb98a" font-weight="bold" text-anchor="start">0.9194</text>
<text x="1200.5" y="489" font-size="18.5" fill="#2fb98a" font-weight="bold" text-anchor="start">0.9370</text>
<text x="1278.6" y="231" font-size="18.5" fill="#ee2c44" font-weight="bold" text-anchor="start">0.9808</text>
<text x="98" y="32.5" font-size="18" fill="#f2f2f2" font-weight="normal" text-anchor="start" textLength="71" lengthAdjust="spacingAndGlyphs">美元瑞郎</text>
<text x="172.8" y="32.8" font-size="16" fill="#f0b445" font-weight="normal" text-anchor="start">&lt;</text>
<text x="184.5" y="32.5" font-size="18" fill="#f0b445" font-weight="normal" text-anchor="start" textLength="36" lengthAdjust="spacingAndGlyphs">日线</text>
<text x="222.3" y="32.8" font-size="16" fill="#f0b445" font-weight="normal" text-anchor="start">&gt;</text>
<text x="267" y="32.5" font-size="18.8" fill="#e8e8e8" font-weight="normal" text-anchor="start" textLength="307" lengthAdjust="spacingAndGlyphs">MA(5,10,30,60,100,200) MA5:0.9725</text>
<text x="588" y="32.5" font-size="18.8" fill="#d6d61e" font-weight="normal" text-anchor="start" textLength="111" lengthAdjust="spacingAndGlyphs">MA10:0.9678</text>
<text x="712" y="32.5" font-size="18.8" fill="#e424e4" font-weight="normal" text-anchor="start" textLength="112" lengthAdjust="spacingAndGlyphs">MA30:0.9584</text>
<text x="836" y="32.5" font-size="18.8" fill="#22d022" font-weight="normal" text-anchor="start" textLength="112" lengthAdjust="spacingAndGlyphs">MA60:0.9650</text>
<text x="961" y="32.5" font-size="18.8" fill="#9a9a9a" font-weight="normal" text-anchor="start" textLength="111" lengthAdjust="spacingAndGlyphs">MA100:0.967</text>
<text x="1192" y="31" font-size="18" fill="#9a9a9a" font-weight="normal" text-anchor="start" textLength="72" lengthAdjust="spacingAndGlyphs">全部主题</text>
<text x="1262" y="31.4" font-size="21" fill="#9a9a9a" font-weight="normal" text-anchor="start">▼</text>
<text x="99" y="621.5" font-size="18.3" fill="#e8e8e8" font-weight="normal" text-anchor="start" textLength="218" lengthAdjust="spacingAndGlyphs">RSI(6,12,24) RSI1:80.3776</text>
<text x="330" y="621.5" font-size="18.3" fill="#d6d61e" font-weight="normal" text-anchor="start" textLength="109" lengthAdjust="spacingAndGlyphs">RSI2:67.9376</text>
<text x="453" y="621.5" font-size="18.3" fill="#e424e4" font-weight="normal" text-anchor="start" textLength="109" lengthAdjust="spacingAndGlyphs">RSI3:58.1142</text>
<text x="12" y="847" font-size="18.5" fill="#f5b942" font-weight="bold" text-anchor="start" textLength="37" lengthAdjust="spacingAndGlyphs">日线</text>
<path d="M57 846L63.5 833L70 846Z" fill="#f5b942"/>
<text x="209" y="843" font-size="18.5" fill="#b4b4b4" font-weight="bold" text-anchor="start">2022/04</text>
<text x="430" y="843" font-size="18.5" fill="#b4b4b4" font-weight="bold" text-anchor="start">2022/05</text>
<text x="661" y="843" font-size="18.5" fill="#b4b4b4" font-weight="bold" text-anchor="start">2022/06</text>
<text x="892" y="843" font-size="18.5" fill="#b4b4b4" font-weight="bold" text-anchor="start">2022/07</text>
<text x="1112.7" y="843" font-size="18.5" fill="#b4b4b4" font-weight="bold" text-anchor="start">2022/08</text>
</g>
</svg>
</body></html>
